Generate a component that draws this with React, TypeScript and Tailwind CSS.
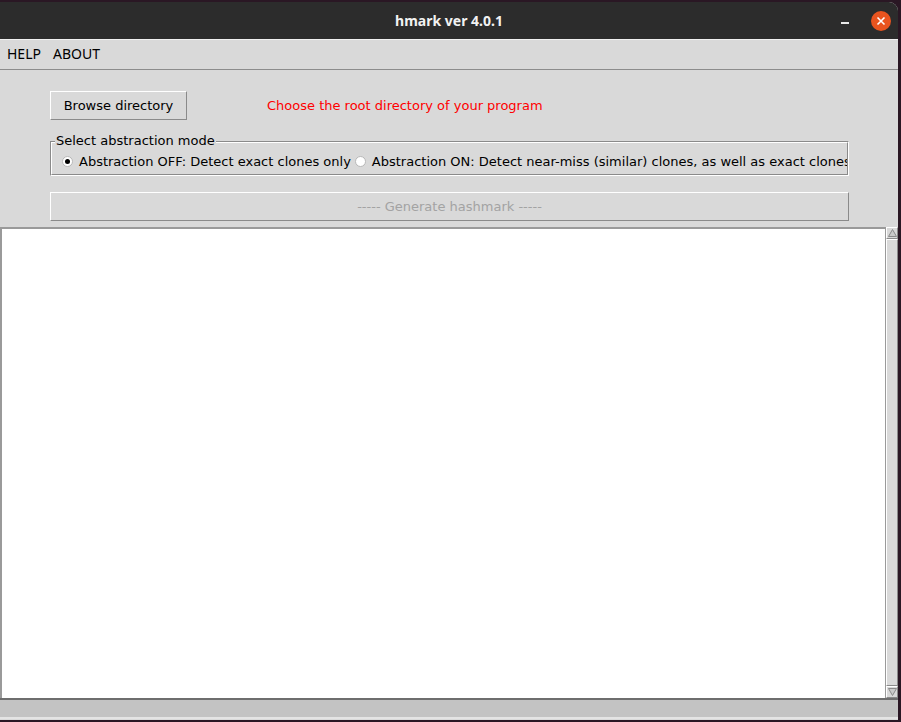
import React from "react";

const uiFont = { fontFamily: '"DejaVu Sans", "Liberation Sans", sans-serif' };

function TitleBar() {
  return (
    <div className="relative flex h-[37px] items-center justify-center bg-[#2c2c2c]">
      <span
        className="text-[14px] font-bold text-[#f2f2f2]"
        style={{ fontFamily: '"Noto Sans", "DejaVu Sans", sans-serif' }}
      >
        hmark ver 4.0.1
      </span>
      <div className="absolute right-[7px] top-0 flex h-full items-center gap-[22px]">
        <span className="mt-[4px] block h-[2px] w-[8px] bg-[#e8e8e8]" />
        <span className="flex h-[20px] w-[20px] items-center justify-center rounded-full bg-[#e9541f]">
          <svg width="10" height="10" viewBox="0 0 10 10">
            <path d="M1.5 1.5 L8.5 8.5 M8.5 1.5 L1.5 8.5" stroke="#fff" strokeWidth="1.6" />
          </svg>
        </span>
      </div>
    </div>
  );
}

function MenuBar() {
  return (
    <div
      className="flex h-[31px] items-center gap-[12px] border-t border-[#f0f0f0] border-b border-b-[#8c8c8c] bg-[#d9d9d9] pl-[7px] text-[14px] text-black"
      style={{ fontFamily: '"Noto Sans", "DejaVu Sans", sans-serif' }}
    >
      <span className="-mt-[2px]">HELP</span>
      <span className="-mt-[2px]">ABOUT</span>
    </div>
  );
}

function Radio({ checked }: { checked?: boolean }) {
  return (
    <span className="flex h-[11px] w-[11px] shrink-0 items-center justify-center rounded-full border border-[#b8b8b8] bg-white">
      {checked && <span className="h-[5px] w-[5px] rounded-full bg-black" />}
    </span>
  );
}

function Controls() {
  return (
    <div className="flex flex-col px-[50px] pt-[21px]" style={uiFont}>
      <div className="flex items-center">
        <button className="flex h-[29px] w-[137px] items-center justify-center border border-t-white border-l-white border-b-[#8a8a8a] border-r-[#8a8a8a] bg-[#d9d9d9] text-[13px] text-black">
          Browse directory
        </button>
        <span className="ml-[80px] text-[13px] text-[#ff0000]">
          Choose the root directory of your program
        </span>
      </div>

      <div className="relative mt-[21px] h-[35px] w-[799px] border border-t-[#8a8a8a] border-l-[#8a8a8a] border-b-white border-r-white">
        <span className="absolute left-[4px] top-[-9px] bg-[#d9d9d9] px-[1px] text-[13px] leading-[16px] text-black">
          Select abstraction mode
        </span>
        <div className="flex h-full items-center overflow-hidden whitespace-nowrap border border-t-white border-l-white border-b-[#8a8a8a] border-r-[#8a8a8a] pl-[10px] pt-[6px] text-[13px] text-black">
          <Radio checked />
          <span className="ml-[6px]">Abstraction OFF: Detect exact clones only</span>
          <span className="ml-[4px]">
            <Radio />
          </span>
          <span className="ml-[6px]">
            Abstraction ON: Detect near-miss (similar) clones, as well as exact clones
          </span>
        </div>
      </div>

      <button className="mt-[16px] flex h-[29px] w-[799px] items-center justify-center border border-t-white border-l-white border-b-[#8a8a8a] border-r-[#8a8a8a] bg-[#d9d9d9] text-[13px] text-[#a3a3a3]">
        ----- Generate hashmark -----
      </button>
    </div>
  );
}

function ScrollArrow({ down }: { down?: boolean }) {
  return (
    <div className="flex h-[12px] w-[12px] items-center justify-center border border-t-white border-l-white border-b-[#8a8a8a] border-r-[#8a8a8a] bg-[#d9d9d9]">
      <svg width="9" height="8" viewBox="0 0 9 8">
        {down ? (
          <path d="M0.5 0.5 H8.5 L4.5 7.5 Z" fill="#c9c9c9" stroke="#8a8a8a" strokeWidth="1" />
        ) : (
          <path d="M0.5 7.5 H8.5 L4.5 0.5 Z" fill="#c9c9c9" stroke="#8a8a8a" strokeWidth="1" />
        )}
      </svg>
    </div>
  );
}

function TextArea() {
  return (
    <div className="mt-[6px] flex h-[471px]">
      <div className="flex-1 border-t-2 border-l-2 border-[#9a9a9a] bg-white" />
      <div className="flex w-[13px] flex-col border-l border-[#9a9a9a] bg-[#c3c3c3]">
        <ScrollArrow />
        <div className="flex-1 border border-t-white border-l-white border-b-[#8a8a8a] border-r-[#8a8a8a] bg-[#d9d9d9]" />
        <ScrollArrow down />
      </div>
    </div>
  );
}

export default function App() {
  return (
    <div className="h-[722px] w-[901px] overflow-hidden bg-[#2a1724]">
      <div className="mt-[2px] flex h-[718px] w-[898px] flex-col overflow-hidden rounded-tr-[9px] bg-[#d9d9d9]">
        <TitleBar />
        <MenuBar />
        <Controls />
        <TextArea />
        <div className="h-[19px] border-t-2 border-[#6e6e6e] bg-[#c3c3c3]" />
        <div className="h-[2px] bg-[#e4e4e4]" />
      </div>
    </div>
  );
}
